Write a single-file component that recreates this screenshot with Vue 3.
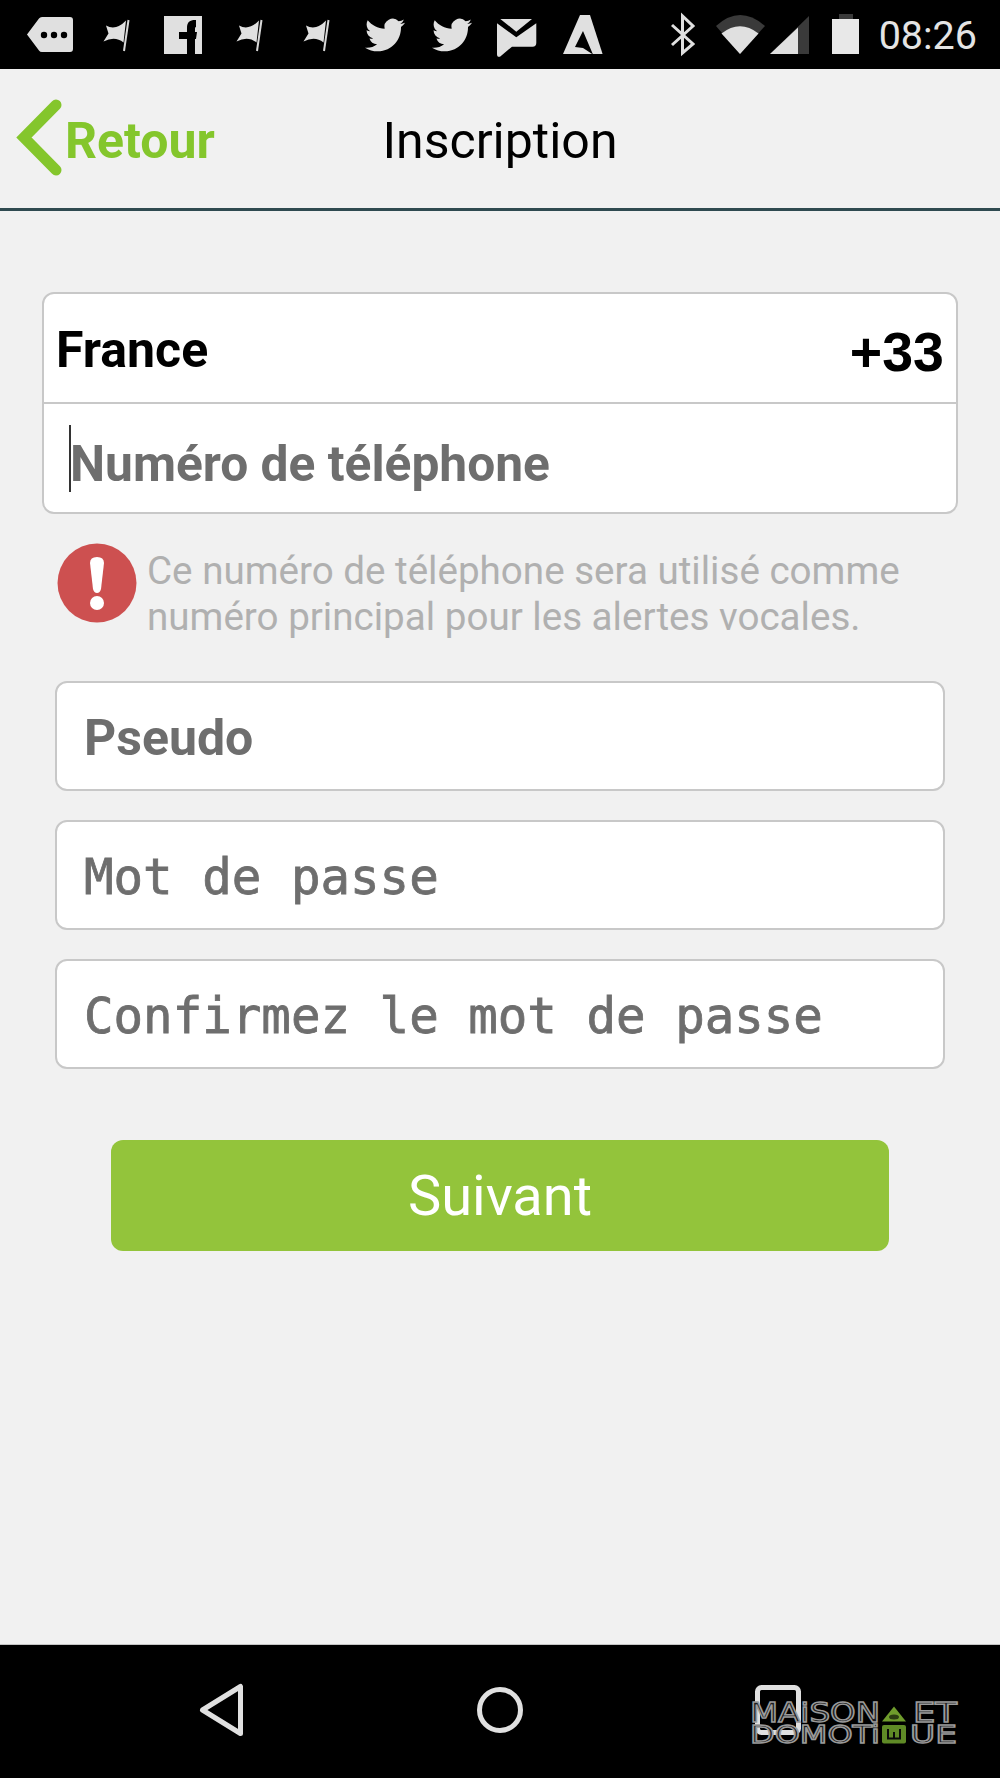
<script setup>
</script>

<template>
  <div class="screen">
    <header class="status">
      <div class="notifs">
        <svg class="cell" viewBox="0 0 66.67 69"><path class="ico" d="M10 34.5 22 18.5Q23 17 25 17H53Q56 17 56 20V49Q56 52 53 52H25Q23 52 22 50.500Z"/><circle cx="27" cy="35" r="3.2"/><circle cx="37" cy="35" r="3.2"/><circle cx="47" cy="35" r="3.2"/></svg>
        <svg class="cell" viewBox="0 0 66.67 69"><path class="ico" d="M22 25.500Q32 31 42 20.500L39.500 42.500Q31 35.500 19.500 41.500L24.500 33.500Z"/><path class="pole" d="M44.500 20 40 51"/></svg>
        <svg class="cell" viewBox="0 0 66.67 69"><rect class="ico" x="14" y="16" width="38" height="38"/><path d="M37 54V39H29V32H37V28C37 22 40 20 45 20H46V27C45 27 45 28 45 30V32H47L46 39H45V54Z"/></svg>
        <svg class="cell" viewBox="0 0 66.67 69"><path class="ico" d="M22 25.500Q32 31 42 20.500L39.500 42.500Q31 35.500 19.500 41.500L24.500 33.500Z"/><path class="pole" d="M44.500 20 40 51"/></svg>
        <svg class="cell" viewBox="0 0 66.67 69"><path class="ico" d="M22 25.500Q32 31 42 20.500L39.500 42.500Q31 35.500 19.500 41.500L24.500 33.500Z"/><path class="pole" d="M44.500 20 40 51"/></svg>
        <svg class="cell" viewBox="0 0 66.67 69"><path class="ico" transform="translate(15 15) scale(1.67)" d="M23.953 4.57a10 10 0 01-2.825.775 4.958 4.958 0 002.163-2.723c-.951.555-2.005.959-3.127 1.184a4.92 4.92 0 00-8.384 4.482C7.69 8.095 4.067 6.13 1.64 3.162a4.822 4.822 0 00-.666 2.475c0 1.71.87 3.213 2.188 4.096a4.904 4.904 0 01-2.228-.616v.06a4.923 4.923 0 003.946 4.827 4.996 4.996 0 01-2.212.085 4.936 4.936 0 004.604 3.417 9.867 9.867 0 01-6.102 2.105c-.39 0-.779-.023-1.17-.067a13.995 13.995 0 007.557 2.209c9.053 0 13.998-7.496 13.998-13.985 0-.21 0-.42-.015-.63A9.935 9.935 0 0024 4.59z"/></svg>
        <svg class="cell" viewBox="0 0 66.67 69"><path class="ico" transform="translate(15 15) scale(1.67)" d="M23.953 4.57a10 10 0 01-2.825.775 4.958 4.958 0 002.163-2.723c-.951.555-2.005.959-3.127 1.184a4.92 4.92 0 00-8.384 4.482C7.69 8.095 4.067 6.13 1.64 3.162a4.822 4.822 0 00-.666 2.475c0 1.71.87 3.213 2.188 4.096a4.904 4.904 0 01-2.228-.616v.06a4.923 4.923 0 003.946 4.827 4.996 4.996 0 01-2.212.085 4.936 4.936 0 004.604 3.417 9.867 9.867 0 01-6.102 2.105c-.39 0-.779-.023-1.17-.067a13.995 13.995 0 007.557 2.209c9.053 0 13.998-7.496 13.998-13.985 0-.21 0-.42-.015-.63A9.935 9.935 0 0024 4.59z"/></svg>
        <svg class="cell" viewBox="0 0 66.67 69"><path class="ico" d="M16.300 19H48L32.300 31.700Z"/><path class="ico" d="M13 23.300 32.300 37.300 52.300 23.300V43Q52.300 46.700 48.500 46.700H28L16 56.700Q13 57.500 13 54Z"/></svg>
        <svg class="cell" viewBox="0 0 66.67 69"><path class="ico" d="M30 15H40L52.600 54H13Z"/><path d="M33 31 25 47 33 48 43 54.500Z"/></svg>
      </div>
      <div class="indicators">
        <svg class="sys" viewBox="670 0 189 69">
          <path class="bt" d="M672 25 693 44 682.500 53V16L693 26 672 45"/>
          <path class="dim" d="M716 26Q740 4 765 26L740 54Z"/>
          <path class="ico" d="M721.500 33.500Q740 19 758.500 33.500L740 54Z"/>
          <path class="dim" d="M809 16V54H770Z"/>
          <path class="ico" d="M798 27.500V54H770Z"/>
          <path class="dim" d="M839 14H853V20H839Z"/>
          <path class="bat" d="M832 19H859V54H832Z"/>
        </svg>
        <span class="time">08:26</span>
      </div>
    </header>

    <nav class="topbar">
      <div class="back">
        <svg class="chev" viewBox="0 0 50 90"><path d="M41 13 9 45.500 41 78"/></svg>
        <span class="label">Retour</span>
      </div>
      <h1>Inscription</h1>
      <div></div>
    </nav>

    <main class="content">
      <section class="phone">
        <div class="country"><span class="name">France</span><span class="code">+33</span></div>
        <div class="number"><i class="caret"></i><span>Numéro de téléphone</span></div>
      </section>

      <div class="hint">
        <svg class="warn" viewBox="0 0 80 80">
          <circle cx="40" cy="40" r="39.500" fill="#cd5050"/>
          <path d="M33 20Q33 14 40 14T47 20L44 46Q43 50 40 50T36 46Z" fill="#fff"/>
          <circle cx="40" cy="60" r="7" fill="#fff"/>
        </svg>
        <p>Ce numéro de téléphone sera utilisé comme numéro principal pour les alertes vocales.</p>
      </div>

      <div class="fields">
        <div class="field bold">Pseudo</div>
        <div class="field mono">Mot de passe</div>
        <div class="field mono">Confirmez le mot de passe</div>
      </div>

      <button class="next">Suivant</button>
    </main>

    <footer class="navbar">
      <svg class="nav-ico" viewBox="0 0 46 54"><path d="M41.500 3.500V50.500L3.500 27Z"/></svg>
      <svg class="nav-ico" viewBox="0 0 46 54"><circle cx="23" cy="27" r="20.500"/></svg>
      <svg class="nav-ico" viewBox="0 0 46 54"><rect x="2.500" y="4.500" width="41" height="45" rx="4"/></svg>
      <svg class="logo" viewBox="0 -10 210 70">
        <text x="0" y="20" textLength="130" lengthAdjust="spacingAndGlyphs">MAiSON</text>
        <path d="M144 4.500 156 19.500H132Z" fill="#6f9c2c"/>
        <ellipse cx="144" cy="15" rx="5" ry="2.500" fill="#2c3d12"/>
        <text x="163" y="20" textLength="44" lengthAdjust="spacingAndGlyphs">ET</text>
        <text class="second" x="0" y="41" textLength="130" lengthAdjust="spacingAndGlyphs">DOMOTi</text>
        <rect x="132" y="23" width="24" height="18.500" rx="2" fill="#5f8a26"/>
        <path d="M138 27V36.500H150V27M144 30V36.500" fill="none" stroke="#0a0a0a" stroke-width="2"/>
        <text class="second" x="160" y="41" textLength="47" lengthAdjust="spacingAndGlyphs">UE</text>
      </svg>
    </footer>
  </div>
</template>

<style scoped>
.screen {
  width: 1000px;
  height: 1778px;
  display: flex;
  flex-direction: column;
  background: #f1f1f1;
  font-family: Roboto, "Liberation Sans", sans-serif;
  overflow: hidden;
}
.status {
  height: 69px;
  flex: none;
  display: flex;
  align-items: center;
  background: #000;
  padding: 0 23px 0 17px;
  box-sizing: border-box;
}
.notifs { display: flex; }
.cell { width: 66.67px; height: 69px; display: block; flex: none; }
.cell circle, .cell path:not(.ico):not(.pole) { fill: #000; }
.ico { fill: #e0e0e0; }
.pole { stroke: #d8d8d8; stroke-width: 2; fill: none; }
.indicators { margin-left: auto; display: flex; align-items: center; gap: 20px; }
.sys { width: 189px; height: 69px; display: block; }
.bt { fill: none; stroke: #e0e0e0; stroke-width: 3; }
.dim { fill: #3a3a3a; }
.bat { fill: #e8e8e8; }
.time { color: #e4e4e4; font-size: 39.500px; line-height: 69px; padding-top: 2px; }

.topbar {
  height: 142px;
  flex: none;
  box-sizing: border-box;
  display: grid;
  grid-template-columns: 1fr auto 1fr;
  align-items: center;
  padding-bottom: 3px;
  border-bottom: 3px solid #2f4a50;
}
.back {
  display: flex;
  align-items: center;
  padding-left: 15px;
  color: #84c62c;
  font-size: 50px;
  font-weight: 700;
  line-height: 58px;
}
.label { padding-top: 8px; }
.chev { width: 50px; height: 90px; display: block; flex: none; }
.chev path { fill: none; stroke: #84c62c; stroke-width: 11; stroke-linecap: round; stroke-linejoin: miter; }
.topbar h1 { margin: 0; padding-top: 8px; font-size: 50px; font-weight: 400; color: #000; line-height: 58px; }

.content {
  flex: 1;
  display: flex;
  flex-direction: column;
  padding: 81px 42px 0;
}
.phone {
  box-sizing: border-box;
  height: 222px;
  background: #fff;
  border: 2px solid #c8c8c8;
  border-radius: 12px;
}
.country {
  height: 110px;
  box-sizing: border-box;
  border-bottom: 2px solid #c8c8c8;
  display: flex;
  justify-content: space-between;
  align-items: center;
  padding: 0 12px;
  font-size: 50px;
  font-weight: 700;
  color: #000;
}
.name { padding-top: 3px; }
.code { font-family: "Liberation Sans", sans-serif; font-size: 55.500px; padding-top: 8px; }
.number {
  height: 108px;
  display: flex;
  align-items: center;
  padding-left: 25px;
  font-size: 49.700px;
  font-weight: 700;
  color: #6e6e6e;
}
.number span { padding-top: 12px; }
.caret { width: 2px; height: 67px; background: #333; margin-right: -1px; flex: none; }
.hint {
  display: flex;
  gap: 10px;
  padding: 29px 0 0 15px;
}
.warn { width: 80px; height: 80px; flex: none; }
.hint p {
  margin: 0;
  padding-top: 5px;
  width: 790px;
  font-size: 38.600px;
  line-height: 46px;
  color: #b0b0b0;
}
.fields {
  display: flex;
  flex-direction: column;
  gap: 29px;
  padding: 0 13px;
  margin-top: 41px;
}
.field {
  box-sizing: border-box;
  height: 110px;
  background: #fff;
  border: 2px solid #c8c8c8;
  border-radius: 12px;
  padding-left: 27px;
  display: flex;
  align-items: center;
  color: #6e6e6e;
  font-size: 50px;
}
.bold { font-weight: 700; padding-top: 4px; }
.mono {
  font-family: "DejaVu Sans Mono", "Liberation Mono", monospace;
  font-size: 49.100px;
  padding-top: 3px;
  -webkit-text-stroke: 0.8px #6e6e6e;
}
.next {
  align-self: center;
  width: 778px;
  height: 111px;
  margin-top: 71px;
  border: none;
  border-radius: 12px;
  background: #93c43b;
  color: #fff;
  font-family: inherit;
  font-size: 56px;
}
.navbar {
  height: 134px;
  flex: none;
  box-sizing: border-box;
  border-top: 1px solid #c4c4c4;
  background: #000;
  display: grid;
  grid-template-columns: repeat(3, 278px);
  justify-content: center;
  justify-items: center;
  align-items: center;
  padding-bottom: 3px;
  position: relative;
}
.nav-ico { width: 46px; height: 54px; display: block; }
.nav-ico path, .nav-ico circle, .nav-ico rect { fill: none; stroke: #e0e0e0; stroke-width: 5; stroke-linejoin: round; }
.logo {
  position: absolute;
  left: 750px;
  top: 47px;
  width: 210px;
  height: 70px;
}
.logo text {
  font-family: "DejaVu Sans", sans-serif;
  font-size: 27px;
  fill: #1c1c1c;
  stroke: #9a9a9a;
  stroke-width: 1.400;
}
.logo .second { font-size: 24.500px; }
</style>
<style>
html, body { margin: 0; background: #f1f1f1; }
</style>
